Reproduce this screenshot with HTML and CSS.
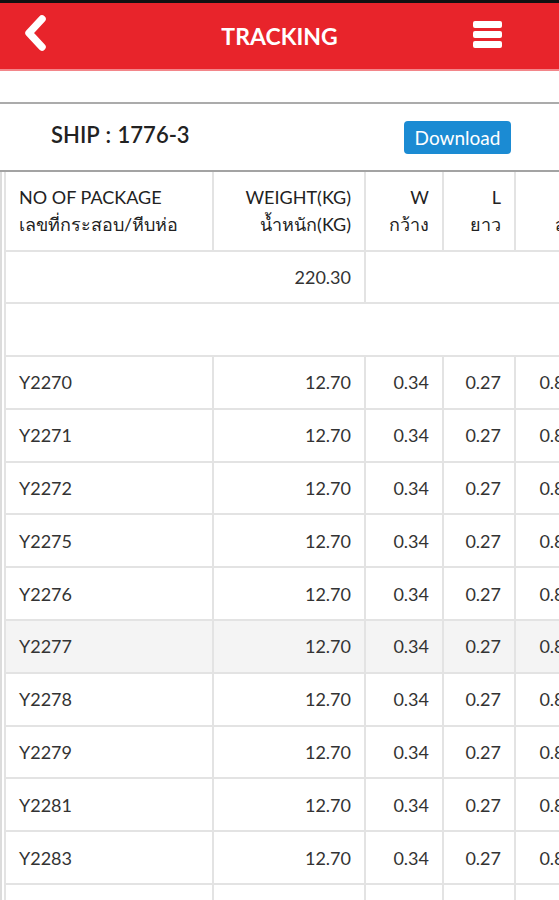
FILE: index.html
```html
<!DOCTYPE html>
<html>
<head>
<meta charset="utf-8">
<link rel="stylesheet" href="styles.css">
</head>
<body>
<div class="statusbar"></div>
<header class="topbar">
  <svg class="back" width="30" height="40" viewBox="0 0 30 40"><polyline points="18,4 5,18 18,32" fill="none" stroke="#fff" stroke-width="7.5" stroke-linecap="round" stroke-linejoin="round"/></svg>
  <div class="title">TRACKING</div>
  <div class="menu"><span></span><span></span><span></span></div>
</header>
<div class="spacer"></div>
<div class="shipbar">
  <div class="ship">SHIP : 1776-3</div>
  <button class="dl">Download</button>
</div>
<div class="tablewrap">
<table class="grid">
  <colgroup><col class="c1"><col class="c2"><col class="c3"><col class="c4"><col class="c5"></colgroup>
  <tr class="head">
    <td class="l">NO OF PACKAGE<br>เลขที่กระสอบ/หีบห่อ</td>
    <td class="r">WEIGHT(KG)<br>น้ำหนัก(KG)</td>
    <td class="r">W<br>กว้าง</td>
    <td class="r">L<br>ยาว</td>
    <td class="r">H<br>สูง</td>
  </tr>
  <tr class="total"><td colspan="2" class="r">220.30</td><td colspan="3"></td></tr>
  <tr class="empty"><td colspan="5"></td></tr>
  <tr class="row"><td class="l">Y2270</td><td class="r">12.70</td><td class="r">0.34</td><td class="r">0.27</td><td class="r">0.85</td></tr>
  <tr class="row"><td class="l">Y2271</td><td class="r">12.70</td><td class="r">0.34</td><td class="r">0.27</td><td class="r">0.85</td></tr>
  <tr class="row"><td class="l">Y2272</td><td class="r">12.70</td><td class="r">0.34</td><td class="r">0.27</td><td class="r">0.85</td></tr>
  <tr class="row"><td class="l">Y2275</td><td class="r">12.70</td><td class="r">0.34</td><td class="r">0.27</td><td class="r">0.85</td></tr>
  <tr class="row"><td class="l">Y2276</td><td class="r">12.70</td><td class="r">0.34</td><td class="r">0.27</td><td class="r">0.85</td></tr>
  <tr class="row hl"><td class="l">Y2277</td><td class="r">12.70</td><td class="r">0.34</td><td class="r">0.27</td><td class="r">0.85</td></tr>
  <tr class="row"><td class="l">Y2278</td><td class="r">12.70</td><td class="r">0.34</td><td class="r">0.27</td><td class="r">0.85</td></tr>
  <tr class="row"><td class="l">Y2279</td><td class="r">12.70</td><td class="r">0.34</td><td class="r">0.27</td><td class="r">0.85</td></tr>
  <tr class="row"><td class="l">Y2281</td><td class="r">12.70</td><td class="r">0.34</td><td class="r">0.27</td><td class="r">0.85</td></tr>
  <tr class="row"><td class="l">Y2283</td><td class="r">12.70</td><td class="r">0.34</td><td class="r">0.27</td><td class="r">0.85</td></tr>
  <tr class="row"><td class="l">Y2284</td><td class="r">12.70</td><td class="r">0.34</td><td class="r">0.27</td><td class="r">0.85</td></tr>
</table>
</div>
</body>
</html>
```
FILE: styles.css
```css
html, body {
  margin: 0;
  padding: 0;
  background: #fff;
  width: 559px;
  overflow: hidden;
  font-family: Lato, "Noto Sans", "DejaVu Sans", sans-serif;
}
.statusbar {
  height: 3px;
  background: #111;
}
.topbar {
  box-sizing: border-box;
  height: 68px;
  background: #e8242b;
  border-bottom: 2px solid #f3868a;
  display: flex;
  align-items: center;
  justify-content: space-between;
  padding: 0 57px 0 24px;
  position: relative;
}
.back {
  display: block;
  margin-top: -2px;
}
.title {
  position: absolute;
  left: 0;
  right: 0;
  text-align: center;
  color: #fff;
  font-weight: 700;
  font-size: 23px;
  pointer-events: none;
}
.menu {
  display: flex;
  flex-direction: column;
  gap: 3px;
  width: 29px;
  margin-top: -3px;
}
.menu span {
  display: block;
  height: 7px;
  background: #fff;
  border-radius: 2px;
}
.spacer {
  height: 31px;
  border-bottom: 2px solid #ababab;
}
.shipbar {
  height: 66px;
  border-bottom: 2px solid #a3a3a3;
  display: flex;
  align-items: center;
  padding-left: 51px;
  padding-right: 48px;
  justify-content: space-between;
}
.ship {
  font-size: 22px;
  font-weight: 600;
  color: #222;
  word-spacing: 1px;
  margin-top: -6px;
}
.dl {
  width: 107px;
  height: 33px;
  background: #1b8bd3;
  color: #fff;
  border: none;
  border-radius: 4px;
  font-family: Lato, "Noto Sans", sans-serif;
  font-size: 19px;
  padding: 0;
}
.tablewrap {
  border-left: 2px solid #dcdcdc;
  padding-left: 2px;
  width: 700px;
}
.grid {
  border-collapse: collapse;
  table-layout: fixed;
  width: 584px;
  border-left: 2px solid #dcdcdc;
  color: #333;
}
.c1 { width: 208px; }
.c2 { width: 152px; }
.c3 { width: 78px; }
.c4 { width: 72px; }
.c5 { width: 74px; }
.grid td {
  border: 2px solid #e3e3e3;
  padding: 0 13px;
  font-size: 18px;
  white-space: nowrap;
  overflow: hidden;
}
.grid td.l { text-align: left; }
.grid td.r { text-align: right; }
.head td {
  height: 78px;
  line-height: 27px;
  color: #222;
  border-top: none;
}
.total td { height: 50px; }
.empty td { height: 51px; }
.row td { height: 50.8px; }
.row.hl td { background: #f4f4f4; }
```
